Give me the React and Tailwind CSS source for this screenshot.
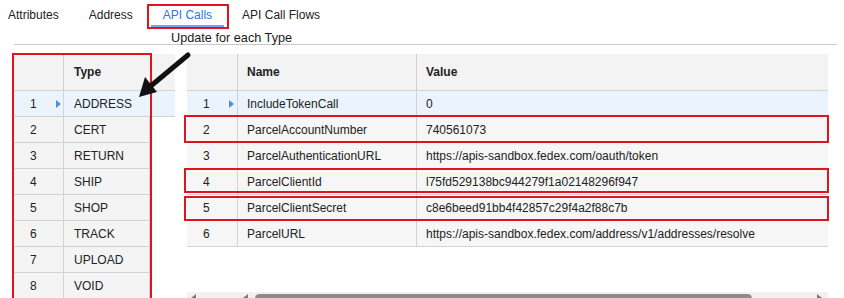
import React from "react"

const types = ["ADDRESS", "CERT", "RETURN", "SHIP", "SHOP", "TRACK", "UPLOAD", "VOID"]

const calls = [
  ["IncludeTokenCall", "0"],
  ["ParcelAccountNumber", "740561073"],
  ["ParcelAuthenticationURL", "https://apis-sandbox.fedex.com/oauth/token"],
  ["ParcelClientId", "l75fd529138bc944279f1a02148296f947"],
  ["ParcelClientSecret", "c8e6beed91bb4f42857c29f4a2f88c7b"],
  ["ParcelURL", "https://apis-sandbox.fedex.com/address/v1/addresses/resolve"],
]

function Pointer() {
  return (
    <span className="absolute left-[42px] top-[9px] w-0 h-0 border-y-[4px] border-y-transparent border-l-[5px] border-l-[#4a8fe0]" />
  )
}

function Tabs() {
  return (
    <div className="flex h-[30px] items-center -ml-[7px]">
      <button className="h-[30px] px-[15px]">Attributes</button>
      <button className="h-[30px] px-[15px]">Address</button>
      <button className="relative h-[30px] px-[15px] text-[#2a78e4]">
        API Calls
        <span className="absolute left-[3px] right-[3px] top-[25px] h-[2px] bg-[#6aa5ee]" />
      </button>
      <button className="h-[30px] px-[15px]">API Call Flows</button>
    </div>
  )
}

function TypeGrid() {
  return (
    <div className="w-[161px] shrink-0">
      <div className="flex h-[37px] bg-[#f3f3f3] border-b border-[#d2d2d2]">
        <div className="w-[50px] border-r border-[#d2d2d2]" />
        <div className="flex items-center pl-[10px] font-bold">Type</div>
      </div>
      {types.map((t, i) => (
        <div
          key={t}
          className={`flex h-[26px] border-b border-[#d2d2d2] ${i === 0 ? "w-[161px] bg-[#ebf4fd]" : "w-[136px] bg-[#f4f4f4] border-r"}`}
        >
          <div className="relative w-[50px] border-r border-[#d2d2d2] flex items-center pl-[16px]">
            {i + 1}
            {i === 0 && <Pointer />}
          </div>
          <div className="flex items-center pl-[10px]">{t}</div>
        </div>
      ))}
    </div>
  )
}

function CallGrid() {
  return (
    <div className="flex flex-col w-[641px]">
      <div className="flex h-[37px] bg-[#f3f3f3] border-b border-[#d2d2d2]">
        <div className="w-[51px] border-r border-[#d2d2d2]" />
        <div className="w-[179px] border-r border-[#d2d2d2] flex items-center pl-[9px] font-bold">Name</div>
        <div className="flex items-center pl-[9px] font-bold">Value</div>
      </div>
      {calls.map(([name, value], i) => (
        <div
          key={name}
          className={`flex h-[26px] border-b border-[#d2d2d2] ${i === 0 ? "bg-[#ebf4fd]" : "bg-[#f6f6f6]"}`}
        >
          <div className="relative w-[51px] border-r border-[#d2d2d2] flex items-center pl-[16px]">
            {i + 1}
            {i === 0 && <Pointer />}
          </div>
          <div className="w-[179px] border-r border-[#d2d2d2] flex items-center pl-[9px]">{name}</div>
          <div className="flex items-center pl-[9px]">{value}</div>
        </div>
      ))}

      {/* horizontal scrollbar, cut by the bottom of the frame */}
      <div className="relative mt-[45px] h-[14px] bg-[#f1f1f1] shrink-0">
        <span className="absolute left-[4px] top-[2px] w-0 h-0 border-y-[4px] border-y-transparent border-r-[5px] border-r-[#7a7a7a]" />
        <span className="absolute left-[56px] top-[2px] w-0 h-0 border-y-[4px] border-y-transparent border-r-[5px] border-r-[#7a7a7a]" />
        <span className="absolute left-[68px] top-[2px] w-[497px] h-[9px] rounded-full bg-[#8b8b8b]" />
        <span className="absolute left-[630px] top-[2px] w-0 h-0 border-y-[4px] border-y-transparent border-l-[5px] border-l-[#7a7a7a]" />
      </div>
    </div>
  )
}

export default function App() {
  return (
    <div
      className="relative w-[844px] h-[298px] overflow-hidden bg-white text-[12px] text-[#222]"
      style={{ fontFamily: '"Liberation Sans", Arial, sans-serif' }}
    >
      <Tabs />
      <div className="ml-[14px] w-[823px] h-[15px] border-b border-[#c8c8c8]" />

      <div className="flex pt-[9px] pl-[14px] gap-[12px]">
        <TypeGrid />
        <CallGrid />
      </div>

      {/* annotations */}
      <span className="absolute left-[147px] top-[4px] w-[82px] h-[25px] border-2 border-[#e0141e]" />
      <span className="absolute left-[171px] top-[31px] text-[12.7px] leading-[15px] text-[#1a1a1a]">Update for each Type</span>
      <span className="absolute left-[12px] top-[53px] w-[140px] h-[250px] border-2 border-[#e0141e]" />
      <span className="absolute left-[184px] top-[115px] w-[645px] h-[28px] border-2 border-[#e0141e]" />
      <span className="absolute left-[184px] top-[168px] w-[645px] h-[25px] border-2 border-[#e0141e]" />
      <span className="absolute left-[184px] top-[196px] w-[645px] h-[25px] border-2 border-[#e0141e]" />

      <svg className="absolute left-0 top-0" width="844" height="298">
        <line x1="188" y1="55" x2="152" y2="85" stroke="#111" strokeWidth="5" strokeLinecap="round" />
        <polygon points="139,97 157,92 145,77" fill="#111" />
      </svg>
    </div>
  )
}
